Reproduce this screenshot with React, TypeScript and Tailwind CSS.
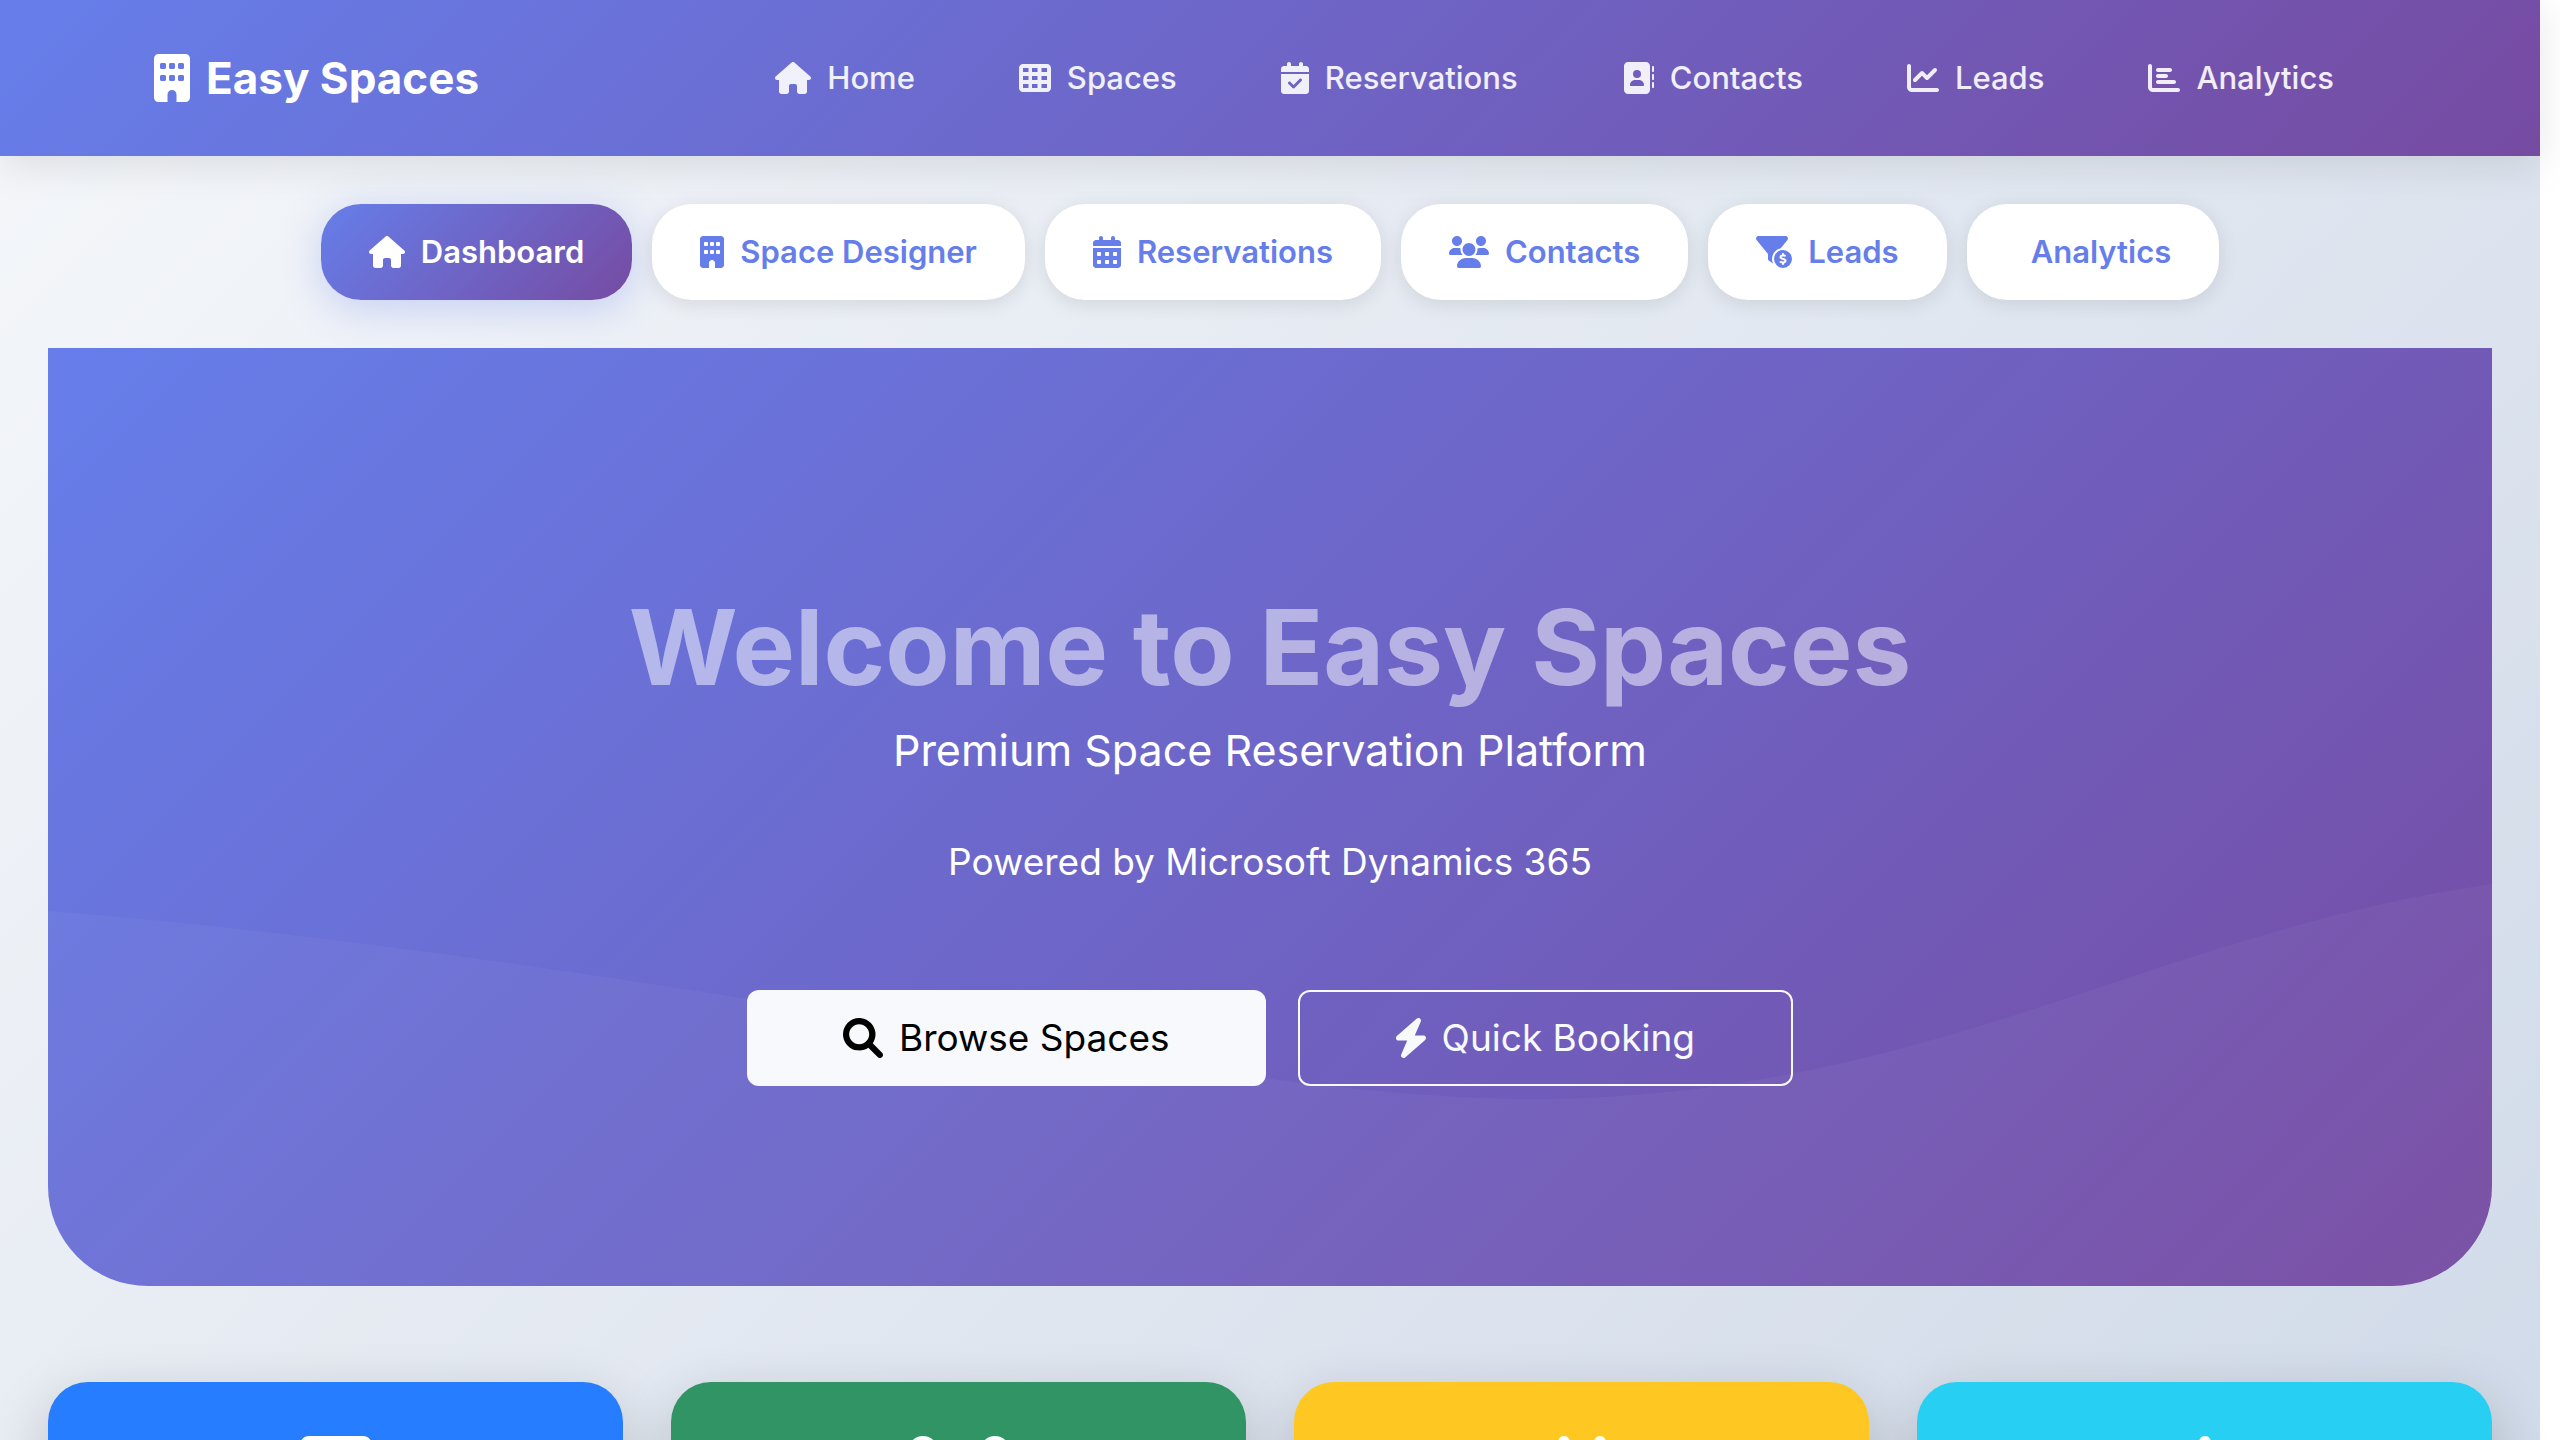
import React from "react";
import {
  FaAddressBook,
  FaBuilding,
  FaCalendarCheck,
  FaCalendarDays,
  FaChartBar,
  FaChartLine,
  FaDollarSign,
  FaFilterCircleDollar,
  FaHouse,
  FaTableCells,
} from "react-icons/fa6";

type Icon = React.ComponentType<{ className?: string }>;
type Item = { label: string; icon?: Icon; width?: string };

function UsersIcon({ className }: { className?: string }) {
  return (
    <svg className={className} viewBox="0 0 640 512" fill="currentColor" aria-hidden="true">
      <path d="M319.9 320c57.41 0 103.1-46.56 103.1-104c0-57.44-46.54-104-103.1-104c-57.41 0-103.1 46.56-103.1 104C215.9 273.4 262.5 320 319.9 320zM369.9 352H270.1C191.6 352 128 411.7 128 485.3C128 500.1 140.7 512 156.4 512h327.2C499.3 512 512 500.1 512 485.3C512 411.7 448.4 352 369.9 352zM512 160c44.18 0 80-35.82 80-80S556.2 0 512 0c-44.18 0-80 35.82-80 80S467.8 160 512 160zM183.9 216c0-5.449 .9824-10.63 1.609-15.91C174.6 194.1 162.6 192 149.9 192H88.08C39.44 192 0 233.8 0 285.3C0 295.8 7.887 304 17.62 304h199.5C196.7 280.2 183.9 249.7 183.9 216zM128 160c44.18 0 80-35.82 80-80S172.2 0 128 0C83.82 0 48 35.82 48 80S83.82 160 128 160zM551.9 192h-61.84c-12.8 0-24.88 3.037-35.86 8.24C454.8 205.5 455.8 210.6 455.8 216c0 33.71-12.78 64.21-33.16 88h199.7C632.1 304 640 295.8 640 285.3C640 233.8 600.6 192 551.9 192z" />
    </svg>
  );
}

function SearchIcon({ className }: { className?: string }) {
  return (
    <svg className={className} viewBox="0 0 512 512" fill="currentColor" aria-hidden="true">
      <path d="M500.3 443.7l-119.7-119.7c27.22-40.41 40.65-90.9 33.46-144.7C401.8 87.79 326.8 13.32 235.2 1.723C99.01-15.51-15.51 99.01 1.724 235.2c11.6 91.64 86.08 166.7 177.6 178.9c53.8 7.189 104.3-6.236 144.7-33.46l119.7 119.7c15.62 15.62 40.95 15.62 56.57 0C515.9 484.7 515.9 459.3 500.3 443.7zM79.1 208c0-70.58 57.42-128 128-128s128 57.42 128 128c0 70.58-57.42 128-128 128S79.1 278.6 79.1 208z" />
    </svg>
  );
}

function BoltIcon({ className }: { className?: string }) {
  return (
    <svg className={className} viewBox="0 0 384 512" fill="currentColor" aria-hidden="true">
      <path d="M240.5 224H352C365.3 224 377.3 232.3 381.1 244.7C386.6 257.2 383.1 271.3 373.1 280.1L117.1 504.1C105.8 513.9 89.27 514.7 77.19 505.9C65.1 497.1 60.7 481.1 66.59 467.4L143.5 288H31.1C18.67 288 6.733 279.7 2.044 267.3C-2.645 254.8 .8944 240.7 10.93 231.9L266.9 7.918C278.2-1.92 294.7-2.669 306.8 6.114C318.9 14.9 323.3 30.87 317.4 44.61L240.5 224z" />
    </svg>
  );
}

const links: Item[] = [
  { label: "Home", icon: FaHouse, width: "w-9" },
  { label: "Spaces", icon: FaTableCells, width: "w-8" },
  { label: "Reservations", icon: FaCalendarCheck, width: "w-7" },
  { label: "Contacts", icon: FaAddressBook, width: "w-8" },
  { label: "Leads", icon: FaChartLine, width: "w-8" },
  { label: "Analytics", icon: FaChartBar, width: "w-8" },
];

const tabs: Item[] = [
  { label: "Dashboard", icon: FaHouse, width: "w-9" },
  { label: "Space Designer", icon: FaBuilding, width: "w-6" },
  { label: "Reservations", icon: FaCalendarDays, width: "w-7" },
  { label: "Contacts", icon: UsersIcon, width: "w-10" },
  { label: "Leads", icon: FaFilterCircleDollar, width: "w-9" },
  { label: "Analytics" },
];

const cards: { icon: Icon; color: string; width: string }[] = [
  { icon: FaBuilding, color: "bg-[#267dff]", width: "w-18" },
  { icon: UsersIcon, color: "bg-[#309464]", width: "w-30" },
  { icon: FaCalendarDays, color: "bg-[#ffc721]", width: "w-21" },
  { icon: FaDollarSign, color: "bg-[#27cff3]", width: "w-15" },
];

function Header() {
  return (
    <header className="relative z-10 bg-[linear-gradient(135deg,#667eea_0%,#764ba2_100%)] shadow-[0_8px_40px_rgba(0,0,0,0.1)]">
      <div className="mx-auto flex h-[156px] max-w-[2280px] items-center justify-between px-6 text-white">
        <a href="#" className="flex items-center gap-4 text-[44px] font-bold">
          <FaBuilding className="h-12 w-9 shrink-0" />
          Easy Spaces
        </a>
        <nav className="flex items-center">
          {links.map(({ label, icon: Icon, width }) => (
            <a
              key={label}
              href="#"
              className="flex items-center gap-4 px-[52px] text-[31px] font-medium text-white/90"
            >
              {Icon && <Icon className={`h-8 shrink-0 ${width}`} />}
              {label}
            </a>
          ))}
        </nav>
      </div>
    </header>
  );
}

function Tabs() {
  return (
    <div className="flex justify-center gap-5">
      {tabs.map(({ label, icon: Icon, width }, i) => (
        <button
          key={label}
          type="button"
          className={
            i === 0
              ? "flex h-24 items-center gap-4 rounded-[40px] bg-[linear-gradient(135deg,#667eea_0%,#764ba2_100%)] px-12 text-[31px] font-semibold text-white shadow-[0_8px_40px_rgba(102,126,234,0.3)]"
              : "flex h-24 items-center gap-4 rounded-[40px] bg-white px-12 text-[31px] font-semibold text-[#667eea] shadow-[0_4px_20px_rgba(0,0,0,0.1)]"
          }
        >
          {Icon ? <Icon className={`h-8 shrink-0 ${width}`} /> : <span />}
          {label}
        </button>
      ))}
    </div>
  );
}

function Hero() {
  return (
    <section className="relative overflow-hidden rounded-b-[100px] bg-[linear-gradient(135deg,#667eea_0%,#764ba2_100%)]">
      <svg
        className="absolute inset-0 h-full w-full"
        viewBox="0 0 2444 938"
        preserveAspectRatio="none"
        aria-hidden="true"
      >
        <path
          d="M0 563C600 610 1170 751 1480 751C1880 751 2100 585 2444 536V938H0Z"
          fill="#ffffff"
          fillOpacity="0.04"
        />
      </svg>
      <div className="relative flex flex-col items-center pt-[232px] pb-[200px] text-white">
        <h1 className="text-[105px] leading-[134px] font-bold text-white/50">
          Welcome to Easy Spaces
        </h1>
        <p className="text-[43px] leading-[72px]">Premium Space Reservation Platform</p>
        <p className="mt-11 text-[37px] leading-[64px]">Powered by Microsoft Dynamics 365</p>
        <div className="mt-24 flex gap-8">
          <button
            type="button"
            className="flex h-24 items-center gap-4 rounded-xl bg-[#f8f9fc] px-24 text-[37px] text-black"
          >
            <SearchIcon className="h-10 w-10 shrink-0" />
            Browse Spaces
          </button>
          <button
            type="button"
            className="flex h-24 items-center gap-4 rounded-xl border-2 border-[#f8f9fa] px-24 text-[37px] text-[#f8f9fa]"
          >
            <BoltIcon className="h-10 w-[30px] shrink-0" />
            Quick Booking
          </button>
        </div>
      </div>
    </section>
  );
}

export default function App() {
  return (
    <div className="h-screen overflow-hidden bg-white pr-5 font-['Inter',sans-serif]">
      <div className="min-h-full bg-[linear-gradient(135deg,#f5f7fa_0%,#c3cfe2_130%)]">
        <Header />
        <main className="flex flex-col px-12 pt-12">
          <Tabs />
          <div className="mt-12">
            <Hero />
          </div>
          <div className="mt-24 grid grid-cols-4 gap-12">
            {cards.map(({ icon: Icon, color, width }, i) => (
              <div
                key={i}
                className={`${color} flex h-96 justify-center rounded-[40px] pt-[54px] text-white shadow-[0_20px_60px_rgba(0,0,0,0.2)]`}
              >
                <Icon className={`h-24 shrink-0 ${width}`} />
              </div>
            ))}
          </div>
        </main>
      </div>
    </div>
  );
}
